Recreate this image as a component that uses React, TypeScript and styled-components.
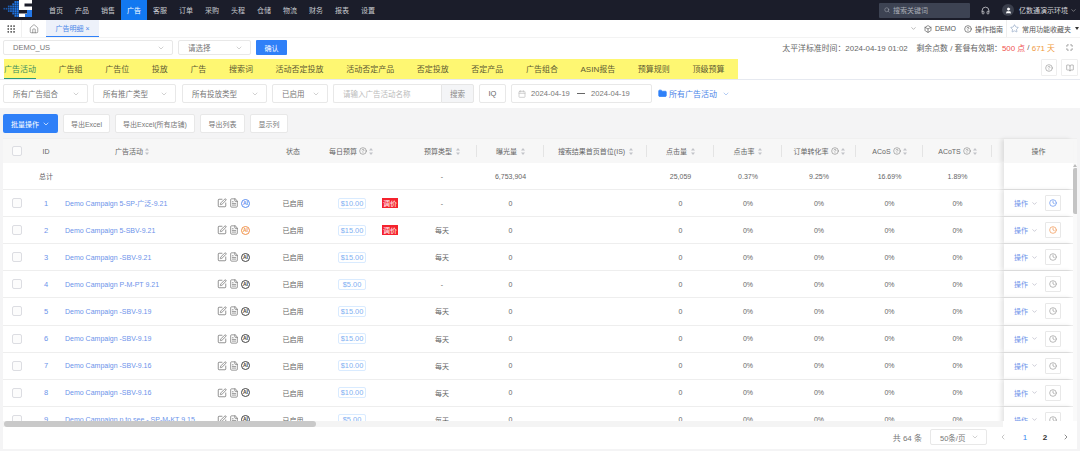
import React from "react";
import styled, { createGlobalStyle } from "styled-components";
import { ChevronDown, ChevronLeft, ChevronRight, Clock, Box, CircleHelp, Search, Headphones, User, Home, Grip, SquarePen, FileText, BookOpen, Maximize, Folder, Calendar, Star } from "lucide-react";

const Global = createGlobalStyle`
  html, body { margin: 0; padding: 0; background: #f4f4f5; }
  body { font-family: "Liberation Sans", "Noto Sans CJK SC", sans-serif; font-size: 7px; color: #555; }
  * { box-sizing: border-box; }
`;
const Page = styled.div`width:1080px;height:451px;overflow:hidden;display:flex;flex-direction:column;`;
const TopNav = styled.header`height:20px;flex:none;background:#1b1d2a;display:flex;align-items:stretch;color:#c9cbd0;`;
const LogoWrap = styled.div`width:43px;flex:none;display:flex;`;
const NavItem = styled.div<{ $active?: boolean }>`width:26px;display:flex;align-items:center;justify-content:center;font-size:7px;background:${p => p.$active ? "#1278f0" : "transparent"};color:${p => p.$active ? "#fff" : "#c9cbd0"};`;
const NavRight = styled.div`margin-left:auto;display:flex;align-items:center;`;
const SearchBox = styled.div`width:91px;height:15px;background:#3d4353;border-radius:1px;display:flex;align-items:center;gap:3px;padding-left:5px;color:#a9adb6;font-size:7px;margin-right:11px;`;
const Avatar = styled.div`width:12px;height:12px;border-radius:50%;background:#3b3f4c;display:flex;align-items:center;justify-content:center;color:#fff;margin:0 5px 0 12px;`;
const UserName = styled.span`color:#d5d6da;width:51px;`;

const TabBar = styled.div`height:17px;flex:none;background:#fff;display:flex;align-items:stretch;font-size:7px;`;
const GridBtn = styled.div`width:22px;display:flex;align-items:center;justify-content:center;color:#444;border-right:1px solid #f0f0f0;`;
const HomeBtn = styled.div`width:24px;display:flex;align-items:center;justify-content:center;color:#666;`;
const OpenTab = styled.div`width:53px;background:#edf1fa;border-bottom:1px solid #2f80f8;color:#4c86e8;display:flex;align-items:center;justify-content:center;gap:2px;`;
const TabRight = styled.div`margin-left:auto;display:flex;align-items:center;color:#555;padding-right:1px;`;
const IconText = styled.span<{ $gap?: number }>`display:flex;align-items:center;gap:3px;margin-right:${p => p.$gap ?? 0}px;`;
const Divider = styled.span`width:1px;height:17px;background:#eee;margin:0 3px;`;
const Caret = styled.span`width:0;height:0;border-left:2.5px solid transparent;border-right:2.5px solid transparent;border-top:3px solid #333;margin-left:4px;`;

const ShopBar = styled.div`height:20px;flex:none;background:#fff;border-top:1px solid #f3f3f3;display:flex;align-items:center;padding:0 7px 0 3px;font-size:8px;`;
const Select = styled.div<{ $w: number; $h?: number; $ml?: number }>`width:${p => p.$w}px;height:${p => p.$h ?? 15}px;margin-left:${p => p.$ml ?? 0}px;flex:none;background:#fff;border:1px solid #e8e8e8;border-radius:2px;display:flex;align-items:center;justify-content:space-between;padding:0 7px 0 9px;color:#777;font-size:7.5px;`;
const Confirm = styled.div`width:31px;height:15px;margin-left:5px;background:#2f80f8;border-radius:1px;color:#fff;font-size:7px;display:flex;align-items:center;justify-content:center;`;
const Info = styled.div`margin-left:auto;display:flex;align-items:center;color:#666;font-size:7.9px;white-space:pre;`;
const Red = styled.span`color:#f0524f;`;
const Orange = styled.span`color:#f09a3e;`;
const ExpandIcon = styled.span`display:flex;margin-left:11px;color:#555;`;

const FeatureTabs = styled.div`height:23px;flex:none;background:#fff;border-bottom:1px solid #e6e9f0;display:flex;align-items:flex-start;padding:2px 2px 0 4px;`;
const YellowBand = styled.div`height:20px;width:734px;background:#fef772;display:flex;align-items:stretch;gap:22.6px;font-size:8px;color:#5d5a32;`;
const FeatureTab = styled.div<{ $active?: boolean }>`display:flex;align-items:center;white-space:nowrap;border-bottom:1px solid ${p => p.$active ? "#2a9a78" : "transparent"};color:${p => p.$active ? "#3f8e5e" : "#5d5a32"};`;
const SquareBtn = styled.div<{ $w: number; $ml?: number }>`width:${p => p.$w}px;height:17px;margin-left:${p => p.$ml ?? 0}px;background:#fff;border:1px solid #eee;border-radius:1px;display:flex;align-items:center;justify-content:center;color:#999;`;
const TabTools = styled.div`margin-left:auto;display:flex;`;

const FilterBar = styled.div`height:28px;flex:none;background:#fff;display:flex;align-items:center;padding:2px 0 3px 3px;`;
const Input = styled.div`width:108px;height:19px;margin-left:5px;border:1px solid #e8e8e8;border-right:0;border-radius:2px 0 0 2px;color:#bbb;font-size:7.5px;display:flex;align-items:center;padding-left:9px;`;
const SearchBtn = styled.div`width:33px;height:19px;background:#f4f5f7;border:1px solid #e6e6e6;border-radius:0 2px 2px 0;color:#888;font-size:7.5px;display:flex;align-items:center;justify-content:center;`;
const IdBtn = styled.div`width:27px;height:19px;margin-left:5px;border:1px solid #e8e8e8;border-radius:2px;color:#666;font-size:7.5px;display:flex;align-items:center;justify-content:center;`;
const DateBox = styled.div`width:141px;height:19px;margin-left:5px;border:1px solid #e8e8e8;border-radius:2px;color:#777;font-size:7.6px;display:flex;align-items:center;padding-left:6px;`;
const DateText = styled.span`margin-left:5px;width:38px;white-space:nowrap;`;
const DateDash = styled.span`width:8px;height:1px;background:#666;margin:0 1px 0 8px;`;
const FolderLink = styled.div`margin-left:6px;color:#4c86e8;font-size:8px;display:flex;align-items:center;gap:2px;`;

const Toolbar = styled.div`height:30px;flex:none;display:flex;align-items:flex-start;padding:6px 0 0 3px;gap:5px;`;
const Primary = styled.div`width:55px;height:19px;background:#2f80f8;border-radius:2px;color:#fff;font-size:7px;display:flex;align-items:center;justify-content:center;gap:3px;`;
const Ghost = styled.div<{ $w: number }>`width:${p => p.$w}px;height:19px;background:#fff;border:1px solid #e8e8e8;border-radius:2px;color:#777;font-size:7px;display:flex;align-items:center;justify-content:center;`;

const Card = styled.div`width:1074px;height:311px;margin-left:3px;background:#fff;display:flex;flex-direction:column;flex:none;border:1px solid #f0f0f0;border-width:1px 0 0;`;
const cols = "27px 32px 152px 56px 46px 91px 70px 67px 103px 67px 68px 74px 67px 69px 12px 69px";
const HeadRow = styled.div`height:24px;flex:none;display:grid;grid-template-columns:${cols} 1px;background:#f7f7f7;color:#666;font-size:7px;`;
const HeadCell = styled.div<{ $sep?: boolean; $pr?: number; $start?: boolean }>`position:relative;display:flex;align-items:center;justify-content:${p => p.$start ? "flex-start" : "center"};gap:2px;white-space:nowrap;padding-right:${p => p.$pr ?? 0}px;padding-left:${p => p.$start ? 13 : 0}px;
  ${p => p.$sep ? `&::after{content:"";position:absolute;right:0;top:6px;height:12px;width:1px;background:#e4e4e4;}` : ""}`;
const FixedHead = styled(HeadCell)`background:#f7f7f7;box-shadow:-3px 0 4px rgba(0,0,0,.1);z-index:2;`;
const Body = styled.div`height:258px;flex:none;display:flex;overflow:hidden;`;
const Rows = styled.div`width:1070px;flex:none;display:flex;flex-direction:column;overflow:hidden;`;
const Row = styled.div<{ $h: number }>`height:${p => p.$h}px;flex:none;display:grid;grid-template-columns:${cols};border-bottom:1px solid #eee;color:#666;font-size:7px;`;
const Cell = styled.div`display:flex;align-items:center;justify-content:center;white-space:nowrap;`;
const NameCell = styled(Cell)`justify-content:flex-start;padding-left:3px;color:#6d93ea;font-size:7px;`;
const IdCell = styled(Cell)`color:#6d93ea;font-size:7.5px;`;
const IconCell = styled(Cell)`justify-content:flex-start;padding-left:3px;gap:2px;color:#666;`;
const BudgetCell = styled(Cell)`justify-content:flex-start;padding-left:22px;gap:16px;`;
const FixedCell = styled(Cell)`background:#fff;box-shadow:-3px 0 4px rgba(0,0,0,.1);z-index:2;justify-content:flex-start;padding-left:10px;`;
const Check = styled.span`width:10px;height:10px;background:#fcfcfc;border:1px solid #dcdde2;border-radius:2px;`;
const Money = styled.span`width:28px;height:11px;border:1px solid #d9ebff;border-radius:2px;color:#7fb0f2;font-size:7.4px;display:flex;align-items:center;justify-content:center;`;
const Reprice = styled.span`width:16px;height:10px;background:#f5222d;color:#fff;font-size:7px;display:flex;align-items:center;justify-content:center;`;
const AiMark = styled.span<{ $c: string }>`width:9px;height:9px;border-radius:50%;border:1px solid ${p => p.$c};color:${p => p.$c};font-size:5px;line-height:1;display:flex;align-items:center;justify-content:center;font-weight:700;`;
const OpLink = styled.span`display:flex;align-items:center;gap:3px;color:#6d93ea;width:31px;`;
const ClockBtn = styled.span<{ $c: string }>`width:16px;height:16px;border:1px solid #e8e8e8;border-radius:1px;display:flex;align-items:center;justify-content:center;color:${p => p.$c};`;
const VTrack = styled.div`width:4px;flex:none;background:#fafafa;display:flex;flex-direction:column;align-items:center;padding-top:1px;`;
const VArrow = styled.span`width:0;height:0;border-left:2px solid transparent;border-right:2px solid transparent;border-bottom:3px solid #bbb;margin-bottom:1px;`;
const VThumb = styled.div`width:5px;height:46px;background:#c4c4c4;border-radius:2px;flex:none;`;
const HTrack = styled.div`height:6px;width:1000px;flex:none;background:#f4f4f4;`;
const HThumb = styled.div`width:312px;height:6px;margin-left:1px;background:#c9c9c9;border-radius:3px;`;
const Pager = styled.div`flex:1;display:flex;align-items:center;justify-content:flex-end;padding:0 0 2px 0;color:#777;font-size:8px;`;
const PagerGap = styled.span<{ $w: number }>`width:${p => p.$w}px;`;
const PageNum = styled.span<{ $on?: boolean }>`width:20px;text-align:center;font-weight:${p => p.$on ? 400 : 700};color:${p => p.$on ? "#3a86ef" : "#333"};`;
const PageArrow = styled.span<{ $w: number }>`width:${p => p.$w}px;display:flex;justify-content:center;color:#555;`;

const Logo = () => {
  const dots: React.ReactNode[] = [];
  for (let c = 0; c < 7; c++) for (let r = 0; r < 7; r++) {
    if (Math.abs(r - 3) <= c * 0.62) dots.push(<rect key={`${c}-${r}`} x={3.5 + c * 2.2} y={1 + r * 2.3} width={1.5 + c * 0.08} height={1.6 + c * 0.08} fill="#1f7bf0" opacity={0.6 + c * 0.07} />);
  }
  return (
    <svg width="33" height="20" viewBox="0 0 33 20">
      {dots}
      <path d="M19 0H32V3.5H24.5V6.5H32V17H19V13.5H27V10H19Z" fill="#fff" />
      <path d="M27 10H32V17H25V14H27Z" fill="#2478e8" />
    </svg>
  );
};

const Sort = () => (
  <svg width="4" height="7" viewBox="0 0 4 7"><path d="M2 0L4 2.6H0ZM2 7L0 4.4H4Z" fill="#c2c4c9" /></svg>
);
const Help = () => <CircleHelp size={8} strokeWidth={1.4} color="#666" />;

const navs = ["首页","产品","销售","广告","客服","订单","采购","头程","仓储","物流","财务","报表","设置"];
const tabs = ["广告活动","广告组","广告位","投放","广告","搜索词","活动否定投放","活动否定产品","否定投放","否定产品","广告组合","ASIN报告","预算规则","顶级预算"];
const data = [
  ["Demo Campaign 5-SP-广泛-9.21","$10.00",true,"-","#5b8def","#5b8def"],
  ["Demo Campaign 5-SBV-9.21","$15.00",true,"每天","#f0914a","#f0914a"],
  ["Demo Campaign -SBV-9.21","$15.00",false,"每天","#444","#999"],
  ["Demo Campaign P-M-PT 9.21","$5.00",false,"-","#444","#999"],
  ["Demo Campaign -SBV-9.19","$15.00",false,"每天","#444","#999"],
  ["Demo Campaign -SBV-9.19","$15.00",false,"每天","#444","#999"],
  ["Demo Campaign -SBV-9.16","$10.00",false,"每天","#444","#999"],
  ["Demo Campaign -SBV-9.16","$10.00",false,"每天","#444","#999"],
  ["Demo Campaign p to see - SP-M-KT 9.15","$5.00",false,"每天","#444","#999"],
] as [string,string,boolean,string,string,string][];

const Dropdown = ({ w, ml, h, label }: { w: number; ml?: number; h?: number; label: string }) => (
  <Select $w={w} $ml={ml} $h={h}>{label}<ChevronDown size={8} color="#bbb" /></Select>
);

export default function App() {
  return (
    <Page>
      <Global />
      <TopNav>
        <LogoWrap><Logo /></LogoWrap>
        {navs.map(n => <NavItem key={n} $active={n === "广告"}>{n}</NavItem>)}
        <NavRight>
          <SearchBox><Search size={6} />搜索关键词</SearchBox>
          <Headphones size={9} color="#d5d6da" />
          <Avatar><User size={7} fill="#fff" /></Avatar>
          <UserName>亿数通演示环境</UserName>
          <ChevronDown size={7} color="#aaa" style={{ marginRight: 3 }} />
        </NavRight>
      </TopNav>
      <TabBar>
        <GridBtn><Grip size={10} /></GridBtn>
        <HomeBtn><Home size={10} strokeWidth={1.4} /></HomeBtn>
        <OpenTab>广告明细<span>×</span></OpenTab>
        <TabRight>
          <ChevronDown size={7} color="#888" style={{ marginRight: 7 }} />
          <IconText $gap={8}><Box size={8} />DEMO</IconText>
          <IconText><CircleHelp size={8} />操作指南</IconText>
          <Divider />
          <IconText><Star size={9} strokeWidth={1.2} color="#5b7ba8" />常用功能收藏夹</IconText>
          <Caret />
        </TabRight>
      </TabBar>
      <ShopBar>
        <Dropdown w={170} label="DEMO_US" />
        <Dropdown w={73} ml={5} label="请选择" />
        <Confirm>确认</Confirm>
        <Info>太平洋标准时间：2024-04-19 01:02    剩余点数 / 套餐有效期：<Red>500 点</Red> / <Orange>671 天</Orange>
          <ExpandIcon><Maximize size={7} /></ExpandIcon>
        </Info>
      </ShopBar>
      <FeatureTabs>
        <YellowBand>
          {tabs.map((t, i) => <FeatureTab key={t} $active={i === 0}>{t}</FeatureTab>)}
        </YellowBand>
        <TabTools>
          <SquareBtn $w={16}><CircleHelp size={8} /></SquareBtn>
          <SquareBtn $w={17} $ml={4}><BookOpen size={8} /></SquareBtn>
        </TabTools>
      </FeatureTabs>
      <FilterBar>
        <Dropdown w={85} h={19} label="所有广告组合" />
        <Dropdown w={83} h={19} ml={5} label="所有推广类型" />
        <Dropdown w={85} h={19} ml={6} label="所有投放类型" />
        <Dropdown w={56} h={19} ml={5} label="已启用" />
        <Input>请输入广告活动名称</Input>
        <SearchBtn>搜索</SearchBtn>
        <IdBtn>IQ</IdBtn>
        <DateBox>
          <Calendar size={8} color="#bbb" />
          <DateText>2024-04-19</DateText>
          <DateDash />
          <DateText>2024-04-19</DateText>
        </DateBox>
        <FolderLink><Folder size={9} fill="#2f80f8" color="#2f80f8" />所有广告活动<ChevronDown size={8} color="#8fb4ee" style={{ marginLeft: 3 }} /></FolderLink>
      </FilterBar>
      <Toolbar>
        <Primary>批量操作<ChevronDown size={8} /></Primary>
        <Ghost $w={47}>导出Excel</Ghost>
        <Ghost $w={80}>导出Excel(所有店铺)</Ghost>
        <Ghost $w={45}>导出列表</Ghost>
        <Ghost $w={38}>显示列</Ghost>
      </Toolbar>
      <Card>
        <HeadRow>
          <HeadCell><Check /></HeadCell>
          <HeadCell>ID</HeadCell>
          <HeadCell $pr={12}>广告活动<Sort /></HeadCell>
          <HeadCell />
          <HeadCell>状态</HeadCell>
          <HeadCell $start>每日预算<Help /><Sort /></HeadCell>
          <HeadCell $sep>预算类型&nbsp;<Sort /></HeadCell>
          <HeadCell $sep>曝光量&nbsp;<Sort /></HeadCell>
          <HeadCell $sep>搜索结果首页首位(IS)&nbsp;<Sort /></HeadCell>
          <HeadCell $sep>点击量&nbsp;<Sort /></HeadCell>
          <HeadCell $sep>点击率&nbsp;<Sort /></HeadCell>
          <HeadCell $sep>订单转化率<Help /><Sort /></HeadCell>
          <HeadCell $sep>ACoS<Help /><Sort /></HeadCell>
          <HeadCell $sep>ACoTS<Help /><Sort /></HeadCell>
          <HeadCell />
          <FixedHead>操作</FixedHead>
        </HeadRow>
        <Body>
          <Rows>
            <Row $h={27}>
              <Cell /><Cell>总计</Cell><Cell /><Cell /><Cell /><Cell />
              <Cell>-</Cell>
              <Cell>6,753,904</Cell><Cell /><Cell>25,059</Cell><Cell>0.37%</Cell><Cell>9.25%</Cell><Cell>16.69%</Cell><Cell>1.89%</Cell><Cell />
              <FixedCell />
            </Row>
            {data.map(([name, money, rep, type, ai, clock], i) => (
              <Row $h={27.12} key={i}>
                <Cell><Check /></Cell>
                <IdCell>{i + 1}</IdCell>
                <NameCell>{name}</NameCell>
                <IconCell>
                  <SquarePen size={10} strokeWidth={1.7} />
                  <FileText size={10} strokeWidth={1.6} />
                  <AiMark $c={ai}>AI</AiMark>
                </IconCell>
                <Cell>已启用</Cell>
                <BudgetCell><Money>{money}</Money>{rep && <Reprice>调价</Reprice>}</BudgetCell>
                <Cell>{type}</Cell>
                <Cell>0</Cell>
                <Cell />
                <Cell>0</Cell>
                <Cell>0%</Cell>
                <Cell>0%</Cell>
                <Cell>0%</Cell>
                <Cell>0%</Cell>
                <Cell />
                <FixedCell>
                  <OpLink>操作<ChevronDown size={7} color="#aab" /></OpLink>
                  <ClockBtn $c={clock}><Clock size={8} /></ClockBtn>
                </FixedCell>
              </Row>
            ))}
          </Rows>
          <VTrack><VArrow /><VThumb /></VTrack>
        </Body>
        <HTrack><HThumb /></HTrack>
        <Pager>
          共 64 条
          <Dropdown w={57} h={16} ml={8} label="50条/页" />
          <PagerGap $w={12} />
          <PageArrow $w={8}><ChevronLeft size={8} color="#aaa" /></PageArrow>
          <PagerGap $w={8} />
          <PageNum $on>1</PageNum>
          <PageNum>2</PageNum>
          <PageArrow $w={22}><ChevronRight size={8} /></PageArrow>
        </Pager>
      </Card>
    </Page>
  );
}
